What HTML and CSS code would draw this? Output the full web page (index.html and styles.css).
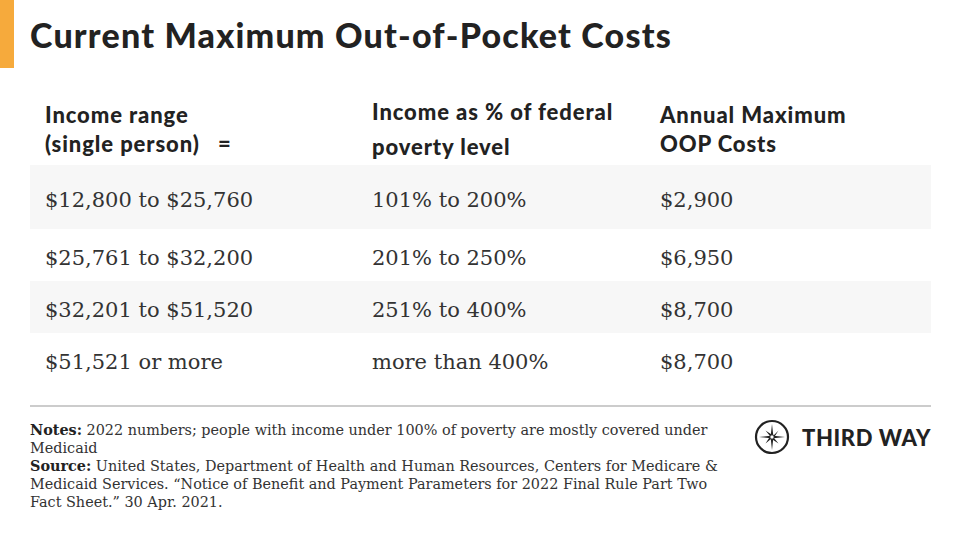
FILE: index.html
```html
<!DOCTYPE html>
<html>
<head>
<meta charset="utf-8">
<link rel="stylesheet" href="styles.css">
</head>
<body>
<div class="page">
  <header class="title-bar">
    <h1 class="title">Current Maximum Out-of-Pocket Costs</h1>
  </header>
  <section class="table">
    <div class="row head">
      <div class="cell h1c">Income range<br>(single person)&nbsp;&nbsp; =</div>
      <div class="cell h2c">Income as % of federal<br>poverty level</div>
      <div class="cell h3c">Annual Maximum<br>OOP Costs</div>
    </div>
    <div class="row data first shade">
      <div class="cell">$12,800 to $25,760</div>
      <div class="cell">101% to 200%</div>
      <div class="cell">$2,900</div>
    </div>
    <div class="row data">
      <div class="cell">$25,761 to $32,200</div>
      <div class="cell">201% to 250%</div>
      <div class="cell">$6,950</div>
    </div>
    <div class="row data shade">
      <div class="cell">$32,201 to $51,520</div>
      <div class="cell">251% to 400%</div>
      <div class="cell">$8,700</div>
    </div>
    <div class="row data">
      <div class="cell">$51,521 or more</div>
      <div class="cell">more than 400%</div>
      <div class="cell">$8,700</div>
    </div>
  </section>
  <footer class="footer">
    <div class="notes">
      <p><b>Notes:</b> <span>2022 numbers; people with income under 100% of poverty are mostly covered under Medicaid</span></p>
      <p><b>Source:</b> <span>United States, Department of Health and Human Resources, Centers for Medicare &amp; Medicaid Services. “Notice of Benefit and Payment Parameters for 2022 Final Rule Part Two Fact Sheet.” 30 Apr. 2021.</span></p>
    </div>
    <div class="logo">
      <svg class="logo-mark" width="36" height="36" viewBox="0 0 36 36">
        <circle cx="18" cy="18" r="16" fill="none" stroke="#222" stroke-width="2.2"/>
        <polygon points="18,5 19.3,16.7 31,18 19.3,19.3 18,31 16.7,19.3 5,18 16.7,16.7" fill="#222"/>
        <polygon points="18,18 24.5,11.5 19.8,18.7 24.5,24.5 17.3,19.8 11.5,24.5 16.2,17.3 11.5,11.5 18.7,16.2" fill="#222"/>
        <circle cx="18" cy="18" r="2.2" fill="#fff" stroke="#222" stroke-width="1"/>
      </svg>
      <span class="logo-text">THIRD WAY</span>
    </div>
  </footer>
</div>
</body>
</html>
```
FILE: styles.css
```css
* { box-sizing: border-box; }
html, body { margin: 0; padding: 0; background: #fff; }
.page { width: 960px; height: 552px; overflow: hidden; }

.title-bar {
  height: 68px;
  border-left: 14px solid #f6aa3c;
  padding-left: 16px;
  display: flex;
  align-items: center;
}
.title {
  margin: 0;
  font-family: "Lato", sans-serif;
  font-weight: 900;
  font-size: 34px;
  color: #222;
  letter-spacing: 1.2px;
}

.table { margin: 24px 29px 0 30px; }
.row {
  display: grid;
  grid-template-columns: 327px 288px 1fr;
  padding-left: 15px;
  align-items: center;
}
.row.head {
  height: 73px;
  font-family: "Lato", sans-serif;
  font-weight: 900;
  font-size: 22px;
  letter-spacing: 0.9px;
  color: #222;
  line-height: 29px;
}
.h2c { line-height: 35px; }
.row.data {
  height: 52px;
  padding-top: 6px;
  font-family: "DejaVu Serif", serif;
  font-size: 21px;
  color: #333;
}
.row.data.first { height: 64px; }
.row.shade { background: #f7f7f7; }

.footer {
  margin: 20px 29px 0 30px;
  border-top: 2px solid #ccc;
  padding-top: 14px;
  display: flex;
  justify-content: space-between;
  align-items: flex-start;
}
.notes {
  width: 700px;
  font-family: "DejaVu Serif", serif;
  font-size: 14.4px;
  line-height: 18px;
  color: #333;
}
.notes p { margin: 0; }
.notes b { color: #222; }
.logo {
  display: flex;
  align-items: center;
  gap: 12px;
  margin-top: -2px;
}
.logo-mark { display: block; }
.logo-text {
  font-family: "Lato", sans-serif;
  font-weight: 900;
  font-size: 22px;
  color: #222;
  letter-spacing: 0.6px;
}
```
